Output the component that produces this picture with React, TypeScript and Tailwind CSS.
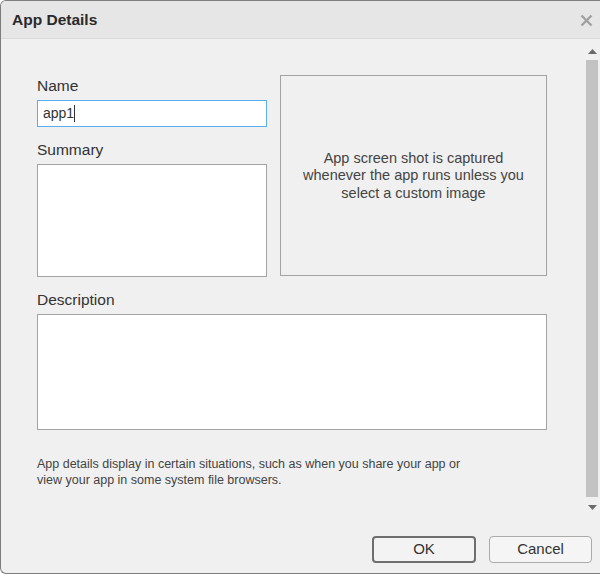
export default function App() {
  return (
    <div className="w-[600px] h-[574px] bg-[#f0f0f0] border-l border-t border-b border-[#7d7d7d] rounded-l-[6px] flex flex-col overflow-hidden font-['Liberation_Sans',Arial,sans-serif] text-[#333]">
      {/* Title bar */}
      <div className="h-[38px] shrink-0 bg-[#e6e6e6] border-b border-[#d9d9d9] flex items-center justify-between pl-[11px] pr-[7px]">
        <span className="text-[15.5px] font-bold text-[#2a2a2a]">App Details</span>
        <svg width="13" height="13" viewBox="0 0 13 13" className="mt-[2px]">
          <path d="M1.5 1.5l10 10M11.5 1.5l-10 10" stroke="#a0a0a0" strokeWidth="2.4" strokeLinecap="butt" />
        </svg>
      </div>

      {/* Scrollable body */}
      <div className="h-[480px] shrink-0 flex">
        <div className="flex-1 pl-[36px] pt-[36px]">
          <div className="flex gap-[13px]">
            <div className="w-[230px] flex flex-col">
              <label className="text-[15.5px] leading-[17px] mt-[2px]">Name</label>
              <div className="mt-[6px] h-[27px] bg-white border border-[#5aaef0] flex items-center pl-[5px] text-[14px] text-[#333]">
                app1<span className="inline-block w-px h-[17px] bg-[#333]" />
              </div>
              <label className="text-[15.5px] leading-[17px] mt-[14px]">Summary</label>
              <div className="mt-[6px] h-[113px] bg-white border border-[#a3a3a3]" />
            </div>
            <div className="w-[267px] h-[201px] border border-[#a3a3a3] flex items-center justify-center text-center text-[14.5px] leading-[17.5px] text-[#444]">
              <p className="mt-[1px]">
                App screen shot is captured
                <br />
                whenever the app runs unless you
                <br />
                select a custom image
              </p>
            </div>
          </div>
          <label className="block text-[15.5px] leading-[17px] mt-[14px]">Description</label>
          <div className="mt-[6px] w-[510px] h-[116px] bg-white border border-[#a3a3a3]" />
          <p className="mt-[26px] text-[12.5px] leading-[16px] text-[#444] w-[510px]">
            App details display in certain situations, such as when you share your app or
            <br />
            view your app in some system file browsers.
          </p>
        </div>

        {/* Scrollbar */}
        <div className="w-[14px] shrink-0 flex flex-col items-center pr-[2px] pt-[10px] pb-[5px]">
          <svg width="9" height="5" viewBox="0 0 9 5">
            <path d="M0 5L4.5 0L9 5Z" fill="#6a6a6a" />
          </svg>
          <div className="mt-[6px] w-[12px] flex-1 bg-[#c2c2c2]" />
          <svg width="9" height="5" viewBox="0 0 9 5" className="mt-[8px] mb-[4px]">
            <path d="M0 0L4.5 5L9 0Z" fill="#6a6a6a" />
          </svg>
        </div>
      </div>

      {/* Footer */}
      <div className="flex-1 flex justify-end items-start pt-[17px] pr-[8px] gap-[13px]">
        <button className="w-[104px] h-[27px] rounded-[4px] border-2 border-[#6e6e6e] bg-[#f3f3f3] text-[15px] text-[#333]">
          OK
        </button>
        <button className="w-[103px] h-[27px] rounded-[4px] border border-[#ababab] bg-[#f5f5f5] text-[15px] text-[#333]">
          Cancel
        </button>
      </div>
    </div>
  );
}
